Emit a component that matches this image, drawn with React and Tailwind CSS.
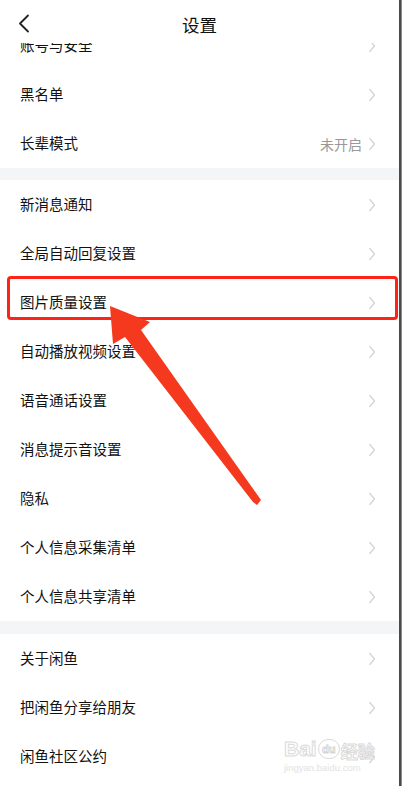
import React from "react";

const font = { fontFamily: '"Noto Sans CJK SC", "Noto Sans", sans-serif' };

function Chevron() {
  return (
    <svg width="8" height="14" viewBox="0 0 8 14" className="shrink-0">
      <path d="M1.8 1.5 L6.5 7 L1.8 12.5" fill="none" stroke="#d4d4d4" strokeWidth="1.3" strokeLinecap="round" strokeLinejoin="round" />
    </svg>
  );
}

function Row({ label, value }) {
  return (
    <div className="h-[49px] flex items-center pl-[20px] pr-[23px] bg-white">
      <span className="flex-1 text-[14.5px] text-[#111] leading-none">{label}</span>
      {value && <span className="text-[14px] text-[#999] mr-[6px] leading-none">{value}</span>}
      <Chevron />
    </div>
  );
}

export default function App() {
  return (
    <div className="relative w-[402px] h-[786px] overflow-hidden bg-white flex" style={font}>
      <div className="w-[399px] h-full flex flex-col">
        <div className="h-[43px] shrink-0 relative flex items-center justify-center bg-white z-10">
          <svg width="14" height="20" viewBox="0 0 14 20" className="absolute left-[17px] top-[14px]">
            <path d="M11 1.5 L3 9.5 L11 17.5" fill="none" stroke="#222" strokeWidth="1.8" strokeLinecap="round" strokeLinejoin="round" />
          </svg>
          <span className="text-[17.5px] text-[#111] leading-none mt-[6px]">设置</span>
        </div>
        <div className="flex-1 overflow-hidden">
          <div className="-mt-[22px]">
            <Row label="账号与安全" />
            <Row label="黑名单" />
            <Row label="长辈模式" value="未开启" />
            <div className="h-[12px] bg-[#f4f5f7]" />
            <Row label="新消息通知" />
            <Row label="全局自动回复设置" />
            <Row label="图片质量设置" />
            <Row label="自动播放视频设置" />
            <Row label="语音通话设置" />
            <Row label="消息提示音设置" />
            <Row label="隐私" />
            <Row label="个人信息采集清单" />
            <Row label="个人信息共享清单" />
            <div className="h-[13px] bg-[#f4f5f7]" />
            <Row label="关于闲鱼" />
            <Row label="把闲鱼分享给朋友" />
            <Row label="闲鱼社区公约" />
          </div>
        </div>
      </div>
      <div className="w-[2px] h-full bg-[#4a4a4a]" />
      <div className="w-[1px] h-full bg-[#8a8a8a]" />

      {/* highlight box */}
      <div className="absolute left-[7px] top-[276px] w-[391px] h-[44px] border-[3.5px] border-[#ff2217] rounded-[4px] pointer-events-none" />

      {/* arrow */}
      <svg className="absolute left-0 top-0 pointer-events-none" width="402" height="786" viewBox="0 0 402 786">
        <polygon
          points="110,306 150,322 141,330 261,500 257,505 253,502 125,337 113,344"
          fill="#f4391f"
        />
      </svg>

      {/* watermark */}
      <div className="absolute left-[284px] top-[738px] flex flex-col items-start pointer-events-none">
        <div className="flex items-end gap-[1px]">
          <span className="text-[21px] font-bold leading-none text-white [-webkit-text-stroke:1px_#dadada]" style={{ fontFamily: '"Liberation Sans", sans-serif' }}>Bai</span>
          <span className="w-[22px] h-[20px] rounded-full border border-[#dadada] text-[11px] font-bold leading-none flex items-center justify-center text-white [-webkit-text-stroke:0.8px_#d0d0d0]" style={{ fontFamily: '"Liberation Sans", sans-serif' }}>du</span>
          <span className="text-[17px] font-bold leading-none text-white [-webkit-text-stroke:1px_#dadada]">经验</span>
        </div>
        <span className="text-[9.5px] leading-none mt-[4px] text-[#e2e2e2]" style={{ fontFamily: '"Liberation Sans", sans-serif' }}>jingyan.baidu.com</span>
      </div>
    </div>
  );
}
